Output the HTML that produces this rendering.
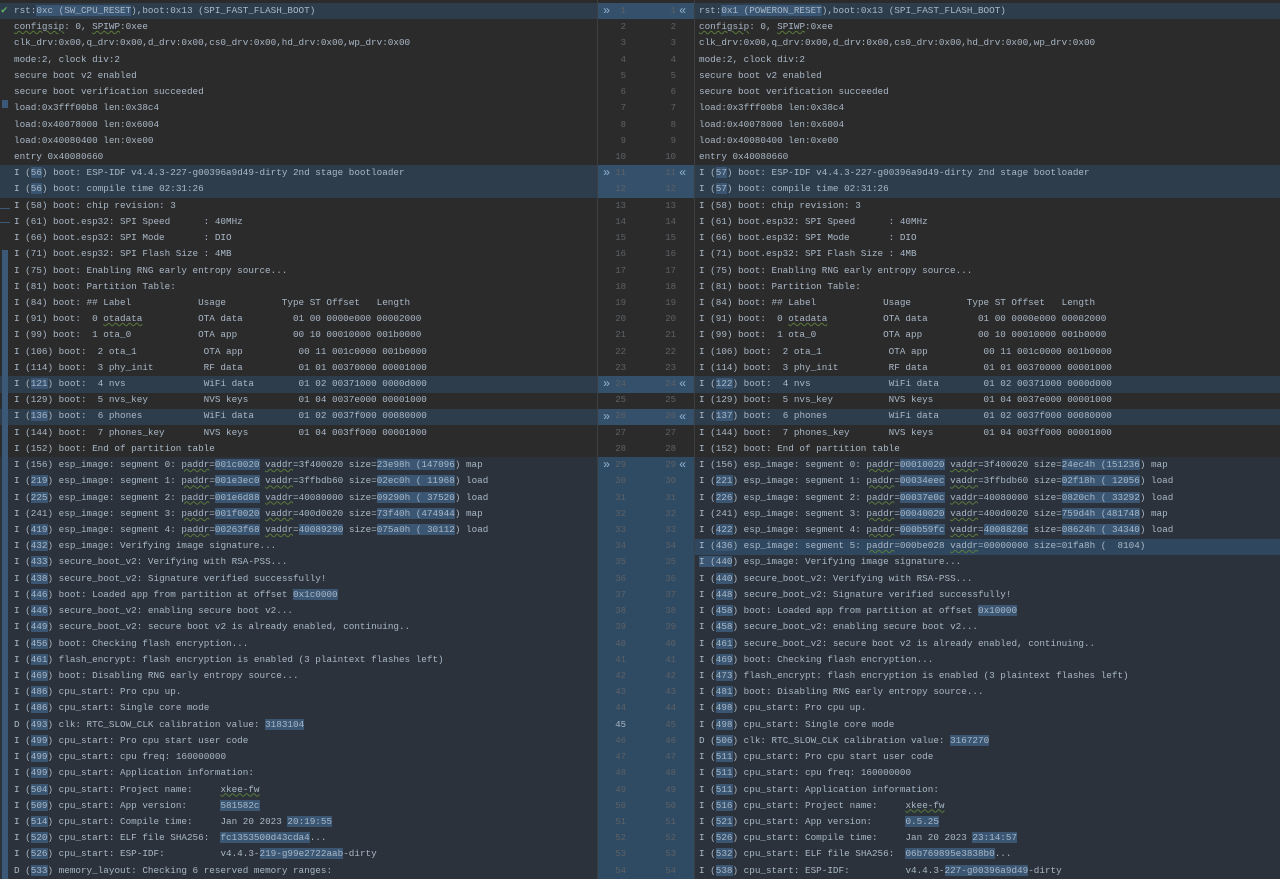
<!DOCTYPE html>
<html><head><meta charset="utf-8"><style>
*{margin:0;padding:0;box-sizing:border-box}
html,body{width:1280px;height:879px;overflow:hidden}
body{background:#2b2b2b;position:relative;font-family:"Liberation Mono",monospace;font-size:9.3px;color:#a9b7c6}
.bg{position:absolute;height:16.23px}
.pane{position:absolute;top:3px;line-height:16.23px}
.pane div{height:16.23px;white-space:pre}
.h{background:#3a5673}
.u{text-decoration:underline wavy #5a7a3a;text-decoration-thickness:1px}
.gut{position:absolute;top:3px;line-height:16.23px;color:#5d6165;font-size:9px;text-align:right}
.gut div{height:16.23px}
.arr{position:absolute;color:#8fb0d0;font-size:12px;line-height:16.23px}
</style></head><body>
<div class="bg" style="left:0;width:597px;top:3px;background:#2e3d4c"></div>
<div class="bg" style="left:694px;width:586px;top:3px;background:#2e3d4c"></div>
<div class="bg" style="left:597px;width:97px;top:3px;background:#34506b"></div>
<div class="bg" style="left:0;width:597px;top:165.3px;height:32.5px;background:#2e3d4c"></div>
<div class="bg" style="left:694px;width:586px;top:165.3px;height:32.5px;background:#2e3d4c"></div>
<div class="bg" style="left:597px;width:97px;top:165.3px;height:32.5px;background:#34506b"></div>
<div class="bg" style="left:0;width:597px;top:376.3px;background:#2e3d4c"></div>
<div class="bg" style="left:694px;width:586px;top:376.3px;background:#2e3d4c"></div>
<div class="bg" style="left:597px;width:97px;top:376.3px;background:#34506b"></div>
<div class="bg" style="left:0;width:597px;top:408.8px;background:#2e3d4c"></div>
<div class="bg" style="left:694px;width:586px;top:408.8px;background:#2e3d4c"></div>
<div class="bg" style="left:597px;width:97px;top:408.8px;background:#34506b"></div>
<div class="bg" style="left:0;width:597px;top:457.4px;height:421.6px;background:#2b323b"></div>
<div class="bg" style="left:694px;width:586px;top:457.4px;height:421.6px;background:#2b323b"></div>
<div class="bg" style="left:597px;width:97px;top:457.4px;height:421.6px;background:#2f4a63"></div>
<div class="bg" style="left:694px;width:586px;top:538.6px;background:#30485f"></div>
<div style="position:absolute;left:597px;top:0;width:1px;height:879px;background:#3c3f41"></div>
<div style="position:absolute;left:694px;top:0;width:1px;height:879px;background:#3c3f41"></div>
<div style="position:absolute;left:2px;top:250px;width:6px;height:629px;background:#3b5877"></div>
<div style="position:absolute;left:2px;top:100px;width:6px;height:8px;background:#3b5877"></div>
<div style="position:absolute;left:0;top:208px;width:10px;height:1px;background:#3b5877"></div>
<div style="position:absolute;left:0;top:222px;width:10px;height:1px;background:#3b5877"></div>
<div style="position:absolute;left:1px;top:3px;color:#5fae5f;font-size:11px">✔</div>

<div class="gut" style="left:600px;width:26px">
<div>1</div><div>2</div><div>3</div><div>4</div><div>5</div><div>6</div><div>7</div><div>8</div><div>9</div><div>10</div><div>11</div><div>12</div><div>13</div><div>14</div><div>15</div><div>16</div><div>17</div><div>18</div><div>19</div><div>20</div><div>21</div><div>22</div><div>23</div><div>24</div><div>25</div><div>26</div><div>27</div><div>28</div><div>29</div><div>30</div><div>31</div><div>32</div><div>33</div><div>34</div><div>35</div><div>36</div><div>37</div><div>38</div><div>39</div><div>40</div><div>41</div><div>42</div><div>43</div><div>44</div><div style="color:#a9b7c6">45</div><div>46</div><div>47</div><div>48</div><div>49</div><div>50</div><div>51</div><div>52</div><div>53</div><div>54</div>
</div>
<div class="gut" style="left:650px;width:26px">
<div>1</div><div>2</div><div>3</div><div>4</div><div>5</div><div>6</div><div>7</div><div>8</div><div>9</div><div>10</div><div>11</div><div>12</div><div>13</div><div>14</div><div>15</div><div>16</div><div>17</div><div>18</div><div>19</div><div>20</div><div>21</div><div>22</div><div>23</div><div>24</div><div>25</div><div>26</div><div>27</div><div>28</div><div>29</div><div>30</div><div>31</div><div>32</div><div>33</div><div>34</div><div>35</div><div>36</div><div>37</div><div>38</div><div>39</div><div>40</div><div>41</div><div>42</div><div>43</div><div>44</div><div>45</div><div>46</div><div>47</div><div>48</div><div>49</div><div>50</div><div>51</div><div>52</div><div>53</div><div>54</div>
</div>
<div class="arr" style="left:603px;top:3px">»</div><div class="arr" style="left:679px;top:3px">«</div>
<div class="arr" style="left:603px;top:165.3px">»</div><div class="arr" style="left:679px;top:165.3px">«</div>
<div class="arr" style="left:603px;top:376.3px">»</div><div class="arr" style="left:679px;top:376.3px">«</div>
<div class="arr" style="left:603px;top:408.8px">»</div><div class="arr" style="left:679px;top:408.8px">«</div>
<div class="arr" style="left:603px;top:457.4px">»</div><div class="arr" style="left:679px;top:457.4px">«</div>

<div class="pane" style="left:14px">
<div>rst:<span class="h">0xc (SW_CPU_RESET</span>),boot:0x13 (SPI_FAST_FLASH_BOOT)</div>
<div><span class="u">configsip</span>: 0, <span class="u">SPIWP</span>:0xee</div>
<div>clk_drv:0x00,q_drv:0x00,d_drv:0x00,cs0_drv:0x00,hd_drv:0x00,wp_drv:0x00</div>
<div>mode:2, clock div:2</div>
<div>secure boot v2 enabled</div>
<div>secure boot verification succeeded</div>
<div>load:0x3fff00b8 len:0x38c4</div>
<div>load:0x40078000 len:0x6004</div>
<div>load:0x40080400 len:0xe00</div>
<div>entry 0x40080660</div>
<div>I (<span class="h">56</span>) boot: ESP-IDF v4.4.3-227-g00396a9d49-dirty 2nd stage bootloader</div>
<div>I (<span class="h">56</span>) boot: compile time 02:31:26</div>
<div>I (58) boot: chip revision: 3</div>
<div>I (61) boot.esp32: SPI Speed      : 40MHz</div>
<div>I (66) boot.esp32: SPI Mode       : DIO</div>
<div>I (71) boot.esp32: SPI Flash Size : 4MB</div>
<div>I (75) boot: Enabling RNG early entropy source...</div>
<div>I (81) boot: Partition Table:</div>
<div>I (84) boot: ## Label            Usage          Type ST Offset   Length</div>
<div>I (91) boot:  0 <span class="u">otadata</span>          OTA data         01 00 0000e000 00002000</div>
<div>I (99) boot:  1 ota_0            OTA app          00 10 00010000 001b0000</div>
<div>I (106) boot:  2 ota_1            OTA app          00 11 001c0000 001b0000</div>
<div>I (114) boot:  3 phy_init         RF data          01 01 00370000 00001000</div>
<div>I (<span class="h">121</span>) boot:  4 nvs              WiFi data        01 02 00371000 0000d000</div>
<div>I (129) boot:  5 nvs_key          NVS keys         01 04 0037e000 00001000</div>
<div>I (<span class="h">136</span>) boot:  6 phones           WiFi data        01 02 0037f000 00080000</div>
<div>I (144) boot:  7 phones_key       NVS keys         01 04 003ff000 00001000</div>
<div>I (152) boot: End of partition table</div>
<div>I (156) esp_image: segment 0: <span class="u">paddr</span>=<span class="h">001c0020</span> <span class="u">vaddr</span>=3f400020 size=<span class="h">23e98h (147096</span>) map</div>
<div>I (<span class="h">219</span>) esp_image: segment 1: <span class="u">paddr</span>=<span class="h">001e3ec0</span> <span class="u">vaddr</span>=3ffbdb60 size=<span class="h">02ec0h ( 11968</span>) load</div>
<div>I (<span class="h">225</span>) esp_image: segment 2: <span class="u">paddr</span>=<span class="h">001e6d88</span> <span class="u">vaddr</span>=40080000 size=<span class="h">09290h ( 37520</span>) load</div>
<div>I (241) esp_image: segment 3: <span class="u">paddr</span>=<span class="h">001f0020</span> <span class="u">vaddr</span>=400d0020 size=<span class="h">73f40h (474944</span>) map</div>
<div>I (<span class="h">419</span>) esp_image: segment 4: <span class="u">paddr</span>=<span class="h">00263f68</span> <span class="u">vaddr</span>=<span class="h">40089290</span> size=<span class="h">075a0h ( 30112</span>) load</div>
<div>I (<span class="h">432</span>) esp_image: Verifying image signature...</div>
<div>I (<span class="h">433</span>) secure_boot_v2: Verifying with RSA-PSS...</div>
<div>I (<span class="h">438</span>) secure_boot_v2: Signature verified successfully!</div>
<div>I (<span class="h">446</span>) boot: Loaded app from partition at offset <span class="h">0x1c0000</span></div>
<div>I (<span class="h">446</span>) secure_boot_v2: enabling secure boot v2...</div>
<div>I (<span class="h">449</span>) secure_boot_v2: secure boot v2 is already enabled, continuing..</div>
<div>I (<span class="h">456</span>) boot: Checking flash encryption...</div>
<div>I (<span class="h">461</span>) flash_encrypt: flash encryption is enabled (3 plaintext flashes left)</div>
<div>I (<span class="h">469</span>) boot: Disabling RNG early entropy source...</div>
<div>I (<span class="h">486</span>) cpu_start: Pro cpu up.</div>
<div>I (<span class="h">486</span>) cpu_start: Single core mode</div>
<div>D (<span class="h">493</span>) clk: RTC_SLOW_CLK calibration value: <span class="h">3183104</span></div>
<div>I (<span class="h">499</span>) cpu_start: Pro cpu start user code</div>
<div>I (<span class="h">499</span>) cpu_start: cpu freq: 160000000</div>
<div>I (<span class="h">499</span>) cpu_start: Application information:</div>
<div>I (<span class="h">504</span>) cpu_start: Project name:     <span class="u">xkee-fw</span></div>
<div>I (<span class="h">509</span>) cpu_start: App version:      <span class="h">581582c</span></div>
<div>I (<span class="h">514</span>) cpu_start: Compile time:     Jan 20 2023 <span class="h">20:19:55</span></div>
<div>I (<span class="h">520</span>) cpu_start: ELF file SHA256:  <span class="h">fc1353500d43cda4</span>...</div>
<div>I (<span class="h">526</span>) cpu_start: ESP-IDF:          v4.4.3-<span class="h">219-g99e2722aab</span>-dirty</div>
<div>D (<span class="h">533</span>) memory_layout: Checking 6 reserved memory ranges:</div>
</div>

<div class="pane" style="left:699px">
<div>rst:<span class="h">0x1 (POWERON_RESET</span>),boot:0x13 (SPI_FAST_FLASH_BOOT)</div>
<div><span class="u">configsip</span>: 0, <span class="u">SPIWP</span>:0xee</div>
<div>clk_drv:0x00,q_drv:0x00,d_drv:0x00,cs0_drv:0x00,hd_drv:0x00,wp_drv:0x00</div>
<div>mode:2, clock div:2</div>
<div>secure boot v2 enabled</div>
<div>secure boot verification succeeded</div>
<div>load:0x3fff00b8 len:0x38c4</div>
<div>load:0x40078000 len:0x6004</div>
<div>load:0x40080400 len:0xe00</div>
<div>entry 0x40080660</div>
<div>I (<span class="h">57</span>) boot: ESP-IDF v4.4.3-227-g00396a9d49-dirty 2nd stage bootloader</div>
<div>I (<span class="h">57</span>) boot: compile time 02:31:26</div>
<div>I (58) boot: chip revision: 3</div>
<div>I (61) boot.esp32: SPI Speed      : 40MHz</div>
<div>I (66) boot.esp32: SPI Mode       : DIO</div>
<div>I (71) boot.esp32: SPI Flash Size : 4MB</div>
<div>I (75) boot: Enabling RNG early entropy source...</div>
<div>I (81) boot: Partition Table:</div>
<div>I (84) boot: ## Label            Usage          Type ST Offset   Length</div>
<div>I (91) boot:  0 <span class="u">otadata</span>          OTA data         01 00 0000e000 00002000</div>
<div>I (99) boot:  1 ota_0            OTA app          00 10 00010000 001b0000</div>
<div>I (106) boot:  2 ota_1            OTA app          00 11 001c0000 001b0000</div>
<div>I (114) boot:  3 phy_init         RF data          01 01 00370000 00001000</div>
<div>I (<span class="h">122</span>) boot:  4 nvs              WiFi data        01 02 00371000 0000d000</div>
<div>I (129) boot:  5 nvs_key          NVS keys         01 04 0037e000 00001000</div>
<div>I (<span class="h">137</span>) boot:  6 phones           WiFi data        01 02 0037f000 00080000</div>
<div>I (144) boot:  7 phones_key       NVS keys         01 04 003ff000 00001000</div>
<div>I (152) boot: End of partition table</div>
<div>I (156) esp_image: segment 0: <span class="u">paddr</span>=<span class="h">00010020</span> <span class="u">vaddr</span>=3f400020 size=<span class="h">24ec4h (151236</span>) map</div>
<div>I (<span class="h">221</span>) esp_image: segment 1: <span class="u">paddr</span>=<span class="h">00034eec</span> <span class="u">vaddr</span>=3ffbdb60 size=<span class="h">02f18h ( 12056</span>) load</div>
<div>I (<span class="h">226</span>) esp_image: segment 2: <span class="u">paddr</span>=<span class="h">00037e0c</span> <span class="u">vaddr</span>=40080000 size=<span class="h">0820ch ( 33292</span>) load</div>
<div>I (241) esp_image: segment 3: <span class="u">paddr</span>=<span class="h">00040020</span> <span class="u">vaddr</span>=400d0020 size=<span class="h">759d4h (481748</span>) map</div>
<div>I (<span class="h">422</span>) esp_image: segment 4: <span class="u">paddr</span>=<span class="h">000b59fc</span> <span class="u">vaddr</span>=<span class="h">4008820c</span> size=<span class="h">08624h ( 34340</span>) load</div>
<div>I (<span class="h">436</span>) esp_image: segment 5: <span class="u">paddr</span>=000be028 <span class="u">vaddr</span>=00000000 size=01fa8h (  8104)</div>
<div><span class="h">I (440</span>) esp_image: Verifying image signature...</div>
<div>I (<span class="h">440</span>) secure_boot_v2: Verifying with RSA-PSS...</div>
<div>I (<span class="h">448</span>) secure_boot_v2: Signature verified successfully!</div>
<div>I (<span class="h">458</span>) boot: Loaded app from partition at offset <span class="h">0x10000</span></div>
<div>I (<span class="h">458</span>) secure_boot_v2: enabling secure boot v2...</div>
<div>I (<span class="h">461</span>) secure_boot_v2: secure boot v2 is already enabled, continuing..</div>
<div>I (<span class="h">469</span>) boot: Checking flash encryption...</div>
<div>I (<span class="h">473</span>) flash_encrypt: flash encryption is enabled (3 plaintext flashes left)</div>
<div>I (<span class="h">481</span>) boot: Disabling RNG early entropy source...</div>
<div>I (<span class="h">498</span>) cpu_start: Pro cpu up.</div>
<div>I (<span class="h">498</span>) cpu_start: Single core mode</div>
<div>D (<span class="h">506</span>) clk: RTC_SLOW_CLK calibration value: <span class="h">3167270</span></div>
<div>I (<span class="h">511</span>) cpu_start: Pro cpu start user code</div>
<div>I (<span class="h">511</span>) cpu_start: cpu freq: 160000000</div>
<div>I (<span class="h">511</span>) cpu_start: Application information:</div>
<div>I (<span class="h">516</span>) cpu_start: Project name:     <span class="u">xkee-fw</span></div>
<div>I (<span class="h">521</span>) cpu_start: App version:      <span class="h">0.5.25</span></div>
<div>I (<span class="h">526</span>) cpu_start: Compile time:     Jan 20 2023 <span class="h">23:14:57</span></div>
<div>I (<span class="h">532</span>) cpu_start: ELF file SHA256:  <span class="h">06b769895e3838b0</span>...</div>
<div>I (<span class="h">538</span>) cpu_start: ESP-IDF:          v4.4.3-<span class="h">227-g00396a9d49</span>-dirty</div>
</div>
</body></html>
